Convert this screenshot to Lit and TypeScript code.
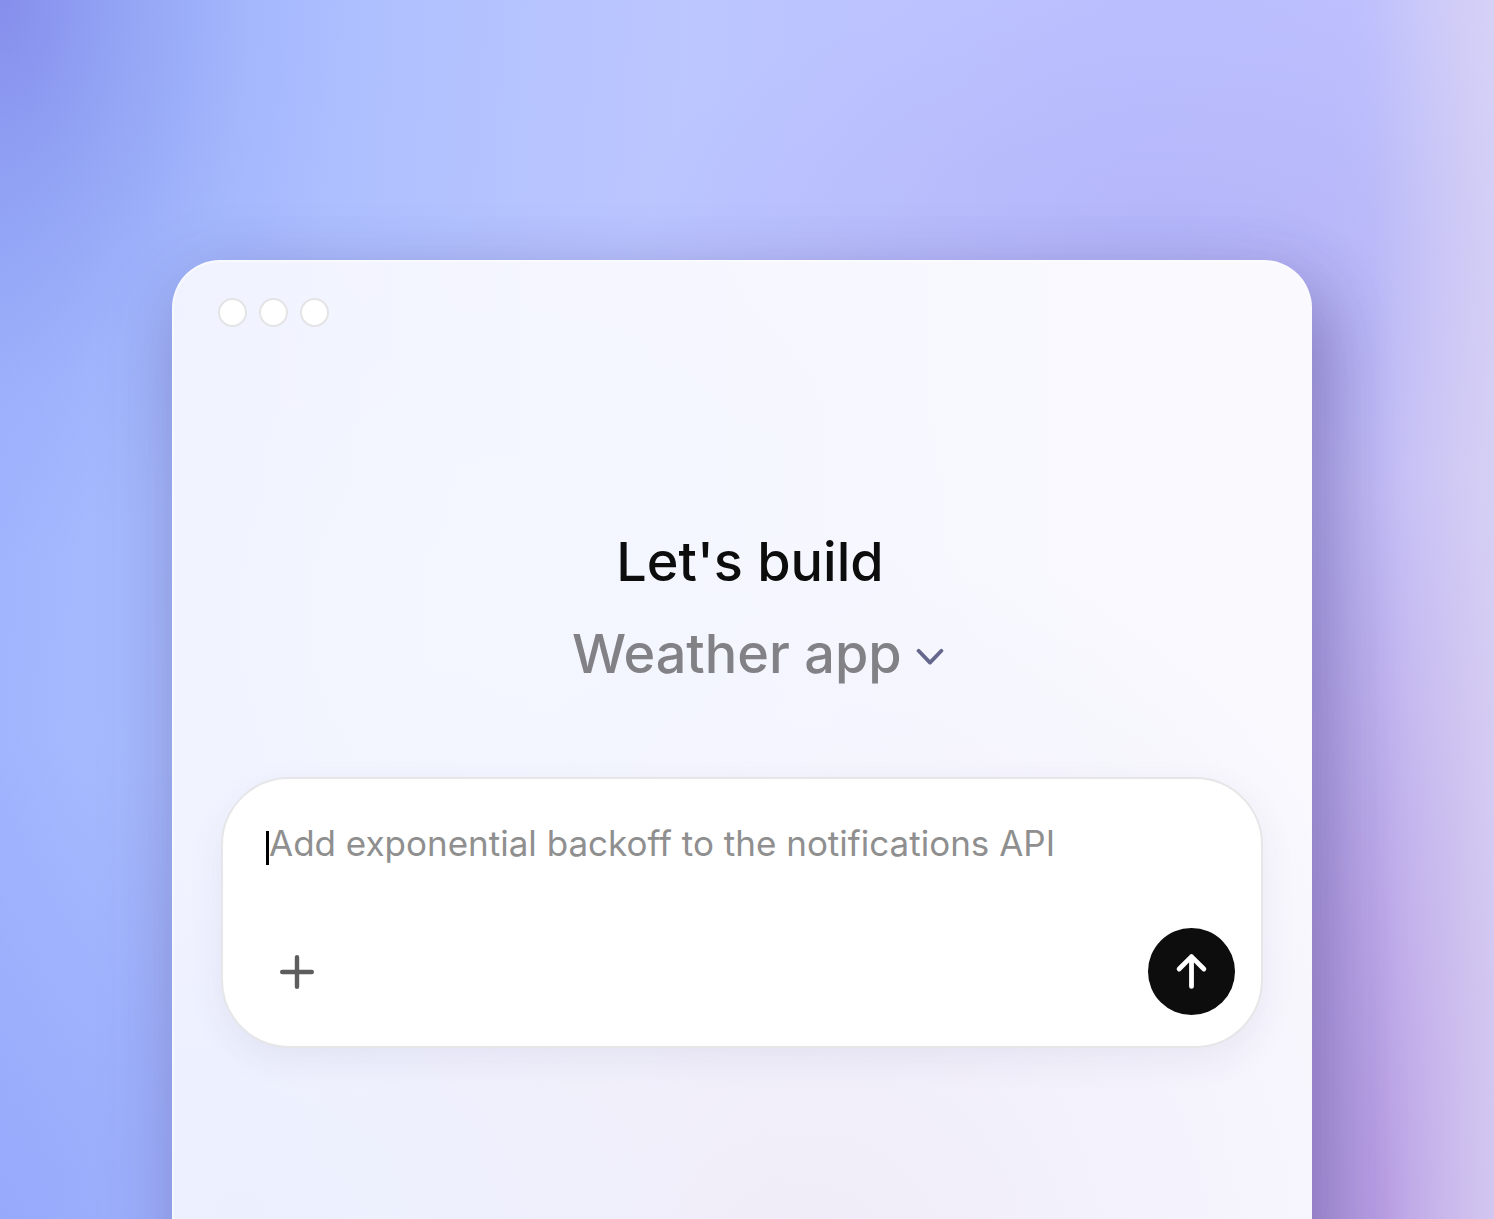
import { LitElement, html, css } from "lit";
import { customElement, state } from "lit/decorators.js";

@customElement("app-composer")
export class AppComposer extends LitElement {
  @state() private value = "";

  static styles = css`
    :host {
      display: block;
    }
    .card {
      display: flex;
      flex-direction: column;
      box-sizing: border-box;
      padding: 40px 26px 31px 43px;
      border: 2px solid #e6e6e8;
      border-radius: 68px;
      background: #fff;
      box-shadow: 0 12px 36px rgba(60, 50, 120, 0.07);
    }
    .entry {
      display: flex;
      align-items: center;
      height: 48px;
    }
    .caret {
      width: 3px;
      height: 34px;
      margin-top: 10px;
      background: #000;
    }
    .prompt {
      flex: 1;
      min-width: 0;
      height: 48px;
      box-sizing: border-box;
      padding: 0;
      border: 0;
      outline: 0;
      resize: none;
      overflow: hidden;
      background: transparent;
      color: #0d0d0d;
      caret-color: #000;
      font: 400 35px/48px Inter, "Liberation Sans", sans-serif;
    }
    .prompt::placeholder {
      color: #8f8f8f;
      opacity: 1;
    }
    .actions {
      display: flex;
      align-items: center;
      justify-content: space-between;
      margin-top: 61px;
    }
    button {
      display: grid;
      place-items: center;
      padding: 0;
      border: 0;
      border-radius: 50%;
      cursor: pointer;
    }
    .add {
      width: 62px;
      height: 62px;
      background: transparent;
      color: #5d5d5d;
    }
    .send {
      width: 87px;
      height: 87px;
      background: #0d0d0d;
      color: #fff;
    }
    svg {
      display: block;
      fill: none;
      stroke: currentColor;
      stroke-linecap: round;
      stroke-linejoin: round;
    }
  `;

  private onInput(e: Event) {
    this.value = (e.target as HTMLTextAreaElement).value;
  }

  render() {
    return html`
      <form class="card" @submit=${(e: Event) => e.preventDefault()}>
        <div class="entry">
          ${this.value ? "" : html`<span class="caret"></span>`}
          <textarea
            class="prompt"
            rows="1"
            aria-label="Prompt"
            placeholder="Add exponential backoff to the notifications API"
            @input=${this.onInput}
          ></textarea>
        </div>
        <div class="actions">
          <button class="add" type="button" aria-label="Add attachment">
            <svg width="36" height="36" viewBox="0 0 36 36" stroke-width="4.4">
              <path d="M18 3.2V32.8M3.2 18H32.8" />
            </svg>
          </button>
          <button class="send" type="submit" aria-label="Send">
            <svg width="35" height="39" viewBox="0 0 35 39" stroke-width="4.8">
              <path d="M17.5 34.4V4.6M5.1 17L17.5 4.6L29.9 17" />
            </svg>
          </button>
        </div>
      </form>
    `;
  }
}

@customElement("app-root")
export class AppRoot extends LitElement {
  static styles = css`
    :host {
      display: block;
      font-family: Inter, "Liberation Sans", sans-serif;
    }
    .desktop {
      display: flex;
      flex-direction: column;
      box-sizing: border-box;
      min-height: 100vh;
      padding: 260px 182px 0 172px;
      overflow: hidden;
      background:
        radial-gradient(ellipse 24% 46% at 0% 0%, rgba(128, 134, 232, 0.8), rgba(132, 146, 236, 0.5) 36%, rgba(140, 160, 244, 0.18) 70%, rgba(150, 170, 250, 0) 100%),
        linear-gradient(270deg, rgba(220, 212, 244, 0.65), rgba(220, 212, 244, 0) 8%),
        radial-gradient(ellipse 24% 90% at 93% 100%, rgba(182, 150, 224, 0.85), rgba(184, 156, 226, 0.62) 35%, rgba(188, 168, 232, 0.24) 70%, rgba(190, 180, 240, 0) 100%),
        radial-gradient(ellipse 30% 40% at 0% 100%, rgba(142, 160, 250, 0.6), rgba(142, 160, 250, 0) 100%),
        radial-gradient(ellipse 36% 22% at 78% 20%, rgba(176, 176, 246, 0.6), rgba(176, 176, 246, 0) 100%),
        linear-gradient(94deg, #9eb2fd 0%, #a4b9fe 8%, #afc0ff 24%, #bbc6ff 42%, #bcc3ff 56%, #bbbfff 72%, #bdbffe 85%, #c8c8fa 93%, #d5d4f7 100%);
    }
    .window {
      flex: 1;
      display: flex;
      flex-direction: column;
      margin-bottom: -96px;
      padding: 38px 49px 160px;
      border-radius: 48px 48px 0 0;
      background:
        radial-gradient(ellipse 40% 46% at 30% 34%, rgba(243, 247, 255, 0.8), rgba(243, 247, 255, 0) 100%),
        radial-gradient(ellipse 50% 40% at 0% 96%, rgba(234, 239, 254, 0.9), rgba(234, 239, 254, 0) 100%),
        radial-gradient(ellipse 64% 70% at 56% 96%, rgba(239, 235, 248, 0.95), rgba(241, 239, 251, 0.5) 60%, rgba(243, 242, 252, 0) 100%),
        linear-gradient(90deg, #f0f2ff 0%, #f6f7ff 50%, #faf9fe 100%);
      box-shadow:
        inset 0 2px 2px rgba(255, 255, 255, 0.6),
        inset 2px 0 2px rgba(255, 255, 255, 0.5),
        0 20px 80px rgba(80, 70, 130, 0.18),
        22px 30px 70px rgba(64, 40, 120, 0.32);
    }
    .lights {
      display: flex;
      gap: 12px;
      margin-left: -3px;
    }
    .light {
      box-sizing: border-box;
      width: 29px;
      height: 29px;
      border: 2px solid #e4e4e6;
      border-radius: 50%;
      background: #fff;
    }
    .intro {
      display: flex;
      flex-direction: column;
      align-items: center;
      gap: 12px;
      margin: 195px 0 83px 16px;
    }
    .title {
      margin: 0;
      color: #0d0d0d;
      font-size: 54px;
      font-weight: 500;
      line-height: 80px;
    }
    .picker {
      display: grid;
      align-items: center;
      margin-left: 16px;
      color: #828186;
    }
    .project {
      grid-area: 1 / 1;
      appearance: none;
      height: 80px;
      padding: 0 42px 0 0;
      border: 0;
      outline: 0;
      background: transparent;
      color: inherit;
      font: 500 54px/80px Inter, "Liberation Sans", sans-serif;
      cursor: pointer;
    }
    .chevron {
      grid-area: 1 / 1;
      justify-self: end;
      pointer-events: none;
      fill: none;
      stroke: #66678c;
      stroke-width: 3.8;
      stroke-linecap: round;
      stroke-linejoin: round;
    }
  `;

  render() {
    return html`
      <div class="desktop">
        <main class="window">
          <div class="lights">
            <span class="light"></span>
            <span class="light"></span>
            <span class="light"></span>
          </div>
          <header class="intro">
            <h1 class="title">Let's build</h1>
            <div class="picker">
              <select class="project" aria-label="Project">
                <option>Weather app</option>
              </select>
              <svg class="chevron" width="28" height="28" viewBox="0 0 28 28">
                <path d="M2.6 10.8L14 22.6L25.4 10.8" />
              </svg>
            </div>
          </header>
          <app-composer></app-composer>
        </main>
      </div>
    `;
  }
}
